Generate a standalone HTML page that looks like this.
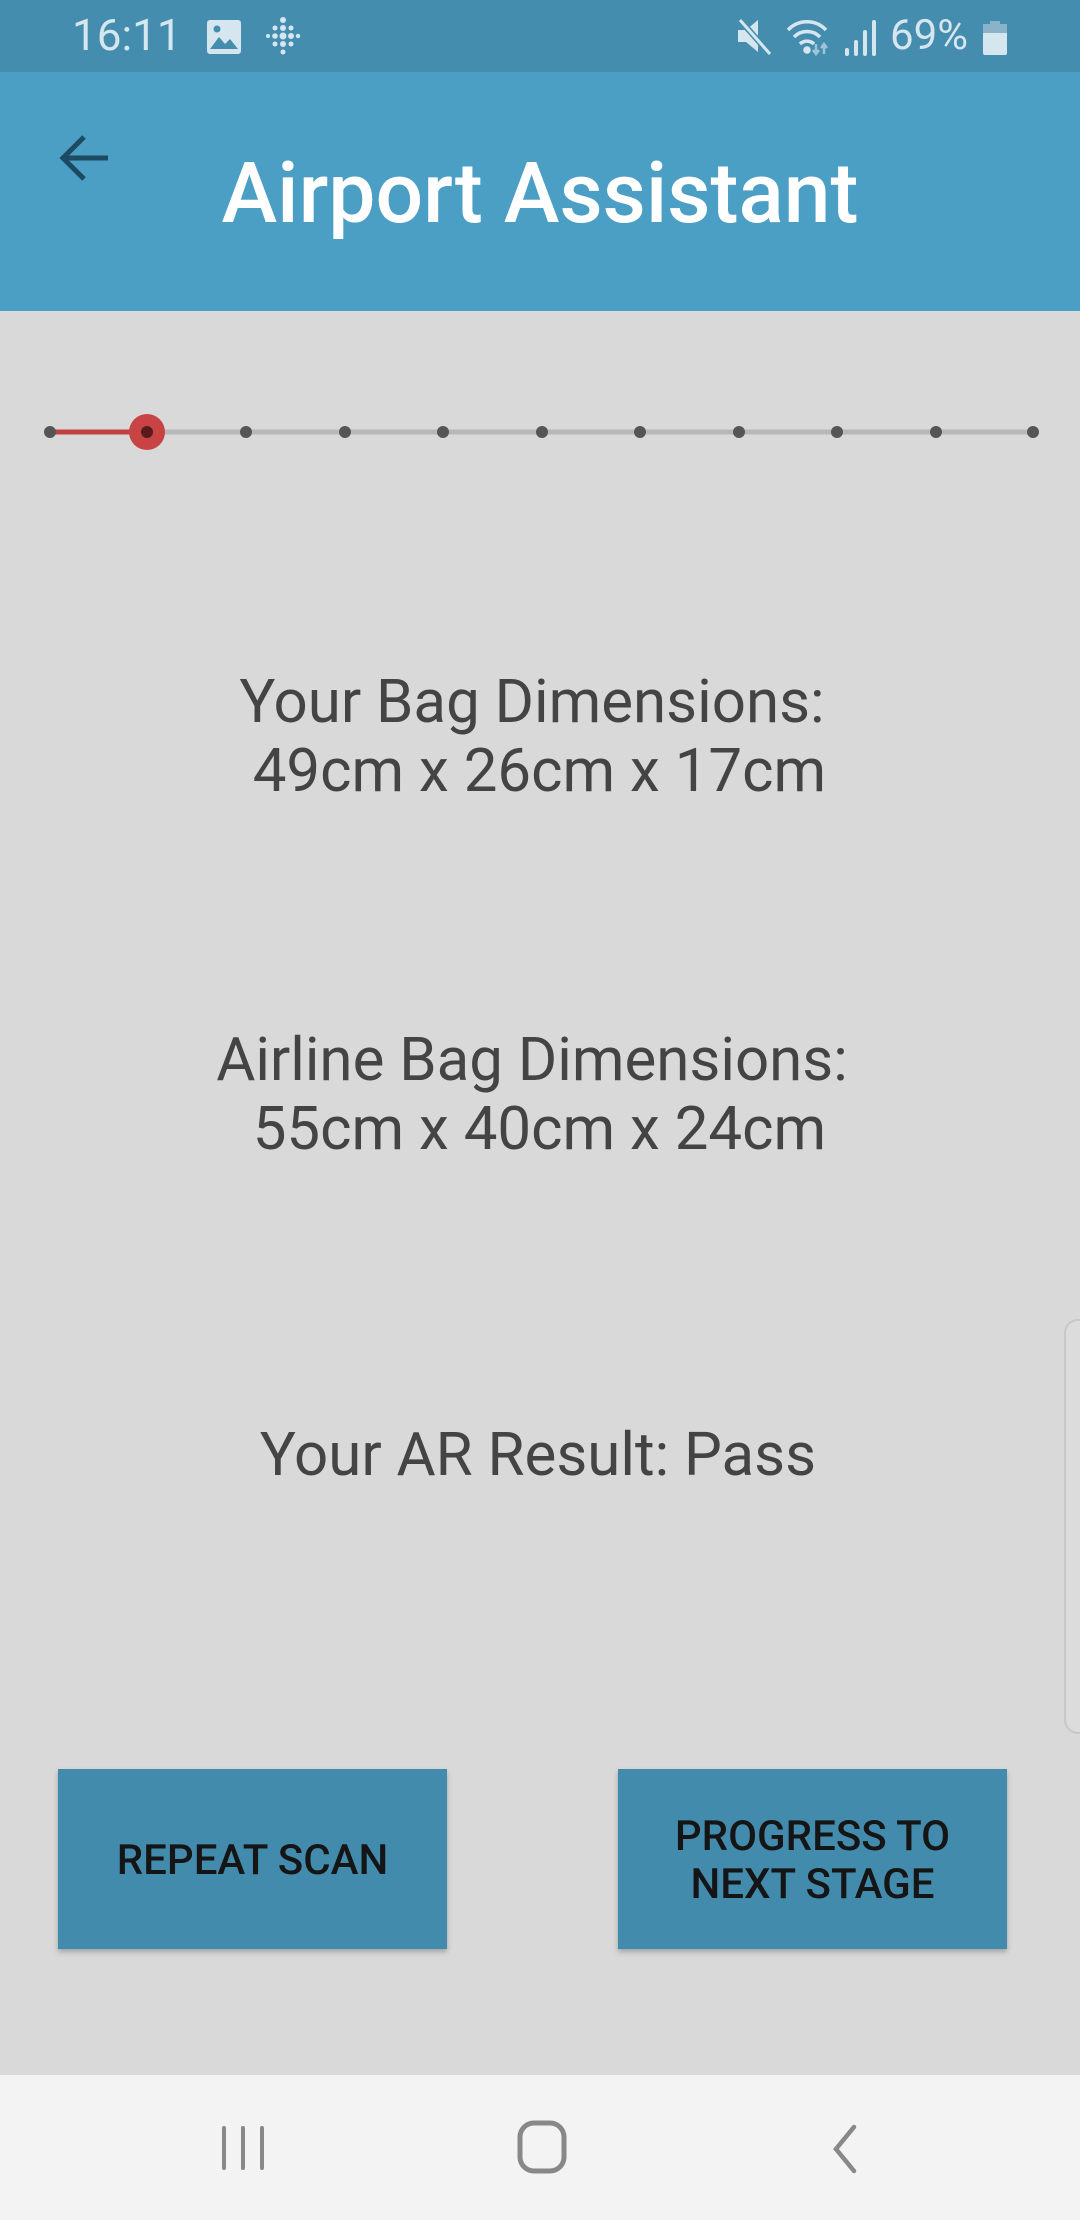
<!DOCTYPE html>
<html><head><meta charset="utf-8"><style>
html,body{margin:0;padding:0;}
body{width:1080px;height:2220px;position:relative;background:#d9d9d9;font-family:"Roboto","Liberation Sans",sans-serif;overflow:hidden;}
.abs{position:absolute;}
#sb{left:0;top:0;width:1080px;height:72px;background:#458dae;color:#d6e6ee;}
#ab{left:0;top:72px;width:1080px;height:239px;background:#4b9ec4;}
.t{position:absolute;left:0;width:1080px;text-align:center;color:#444;font-size:60px;line-height:69px;white-space:pre;}
.btn{position:absolute;background:#438bad;box-shadow:0 3px 5px rgba(0,0,0,0.25);color:#151515;font-size:42px;line-height:48px;font-weight:500;text-align:center;display:flex;align-items:center;justify-content:center;}
#nav{left:0;top:2075px;width:1080px;height:145px;background:#f3f3f3;}
</style></head><body>
<div id="sb" class="abs">
  <div class="abs" style="left:72px;top:10px;font-size:44px;line-height:50px;">16:11</div>
  <svg class="abs" style="left:206px;top:19px" width="36" height="36" viewBox="0 0 36 36"><rect x="1" y="1" width="34" height="34" rx="3" fill="#d6e6ee"/><path d="M4 30 L13 18 L19 25 L24 20 L32 30 Z" fill="#458dae"/><circle cx="11" cy="10" r="3.5" fill="#458dae"/></svg>
  <svg class="abs" style="left:265px;top:16px" width="36" height="42" viewBox="0 0 36 42" fill="#d6e6ee"><circle cx="18" cy="4" r="3"/><circle cx="18" cy="12" r="3"/><circle cx="18" cy="20" r="3.5"/><circle cx="18" cy="28" r="3"/><circle cx="18" cy="36" r="2.5"/><circle cx="10" cy="12" r="2.5"/><circle cx="10" cy="20" r="2.8"/><circle cx="10" cy="28" r="2.5"/><circle cx="26" cy="12" r="2.5"/><circle cx="26" cy="20" r="3"/><circle cx="26" cy="28" r="2.5"/><circle cx="3" cy="20" r="2"/><circle cx="33" cy="20" r="2.2"/></svg>
  <svg class="abs" style="left:736px;top:18px" width="38" height="38" viewBox="0 0 38 38"><path d="M2 12 H10 L22 2 V34 L10 24 H2 Z" fill="#d6e6ee"/><path d="M4 2 L34 36" stroke="#458dae" stroke-width="6"/><path d="M4 2 L34 36" stroke="#d6e6ee" stroke-width="3"/></svg>
  <svg class="abs" style="left:786px;top:18px" width="48" height="38" viewBox="0 0 48 38" fill="none" stroke="#d6e6ee" stroke-width="3.5"><path d="M2 12 A26 26 0 0 1 40 12"/><path d="M8 19 A18 18 0 0 1 34 19"/><path d="M14 26 A10 10 0 0 1 28 26"/><circle cx="21" cy="32" r="2" fill="#d6e6ee"/><path d="M30 26 V36 M27 32 L30 36 L33 32 M38 36 V26 M35 30 L38 26 L41 30" stroke="#9fc3d6" stroke-width="2.5"/></svg>
  <svg class="abs" style="left:844px;top:20px" width="34" height="36" viewBox="0 0 34 36" fill="#d6e6ee"><rect x="1" y="28" width="4" height="8" rx="2"/><rect x="10" y="20" width="4" height="16" rx="2"/><rect x="19" y="10" width="4" height="26" rx="2"/><rect x="28" y="0" width="4" height="36" rx="2"/></svg>
  <div class="abs" style="left:890px;top:12px;font-size:42px;line-height:48px;">69%</div>
  <svg class="abs" style="left:983px;top:21px" width="24" height="34" viewBox="0 0 24 34"><rect x="7" y="0" width="10" height="4" fill="#8ab3c9"/><rect x="0" y="3" width="24" height="31" rx="2" fill="#d6e6ee"/><rect x="0" y="3" width="24" height="9" fill="#8ab3c9"/></svg>
</div>
<div id="ab" class="abs">
  <svg class="abs" style="left:58px;top:62px" width="52" height="48" viewBox="0 0 52 48" fill="none" stroke="#1c4a62" stroke-width="5"><path d="M50 24 H6 M26 3 L5 24 L26 45"/></svg>
  <div class="abs" style="left:0;width:1080px;top:76px;text-align:center;color:#fff;font-size:84px;line-height:92px;font-weight:500;">Airport Assistant</div>
</div>
<svg class="abs" style="left:0;top:410px" width="1080" height="44" viewBox="0 0 1080 44">
  <line x1="50" y1="22" x2="1033" y2="22" stroke="#b8b8b8" stroke-width="5"/>
  <line x1="50" y1="22" x2="147" y2="22" stroke="#c04040" stroke-width="5"/>
  <circle cx="147" cy="22" r="18" fill="#c84444"/>
  <g fill="#555"><circle cx="50" cy="22" r="6"/><circle cx="147" cy="22" r="6" fill="#5a1a1a"/><circle cx="246" cy="22" r="6"/><circle cx="345" cy="22" r="6"/><circle cx="443" cy="22" r="6"/><circle cx="542" cy="22" r="6"/><circle cx="640" cy="22" r="6"/><circle cx="739" cy="22" r="6"/><circle cx="837" cy="22" r="6"/><circle cx="936" cy="22" r="6"/><circle cx="1033" cy="22" r="6"/></g>
</svg>
<div class="t" style="top:667px;left:-8px">Your Bag Dimensions:<br> 49cm x 26cm x 17cm</div>
<div class="t" style="top:1025px;left:-8px">Airline Bag Dimensions:<br> 55cm x 40cm x 24cm</div>
<div class="t" style="top:1420px;left:-2px">Your AR Result: Pass</div>
<div class="abs" style="left:1064px;top:1319px;width:30px;height:411px;border:2px solid #c8c8c8;border-radius:14px;background:#dcdcdc;"></div>
<div class="btn" style="left:58px;top:1769px;width:389px;height:180px;padding-top:4px;box-sizing:border-box;">REPEAT SCAN</div>
<div class="btn" style="left:618px;top:1769px;width:389px;height:180px;padding-top:4px;box-sizing:border-box;">PROGRESS TO<br>NEXT STAGE</div>
<div id="nav" class="abs">
  <svg class="abs" style="left:218px;top:50px" width="50" height="46" viewBox="0 0 50 46" stroke="#888" stroke-width="4" stroke-linecap="round"><path d="M6 3 V43 M25 3 V43 M44 3 V43"/></svg>
  <svg class="abs" style="left:516px;top:44px" width="52" height="56" viewBox="0 0 52 56" fill="none" stroke="#888" stroke-width="5"><rect x="4" y="4" width="44" height="48" rx="14"/></svg>
  <svg class="abs" style="left:828px;top:48px" width="34" height="52" viewBox="0 0 34 52" fill="none" stroke="#888" stroke-width="4.5" stroke-linecap="round"><path d="M26 4 L8 26 L26 48"/></svg>
</div>
</body></html>
